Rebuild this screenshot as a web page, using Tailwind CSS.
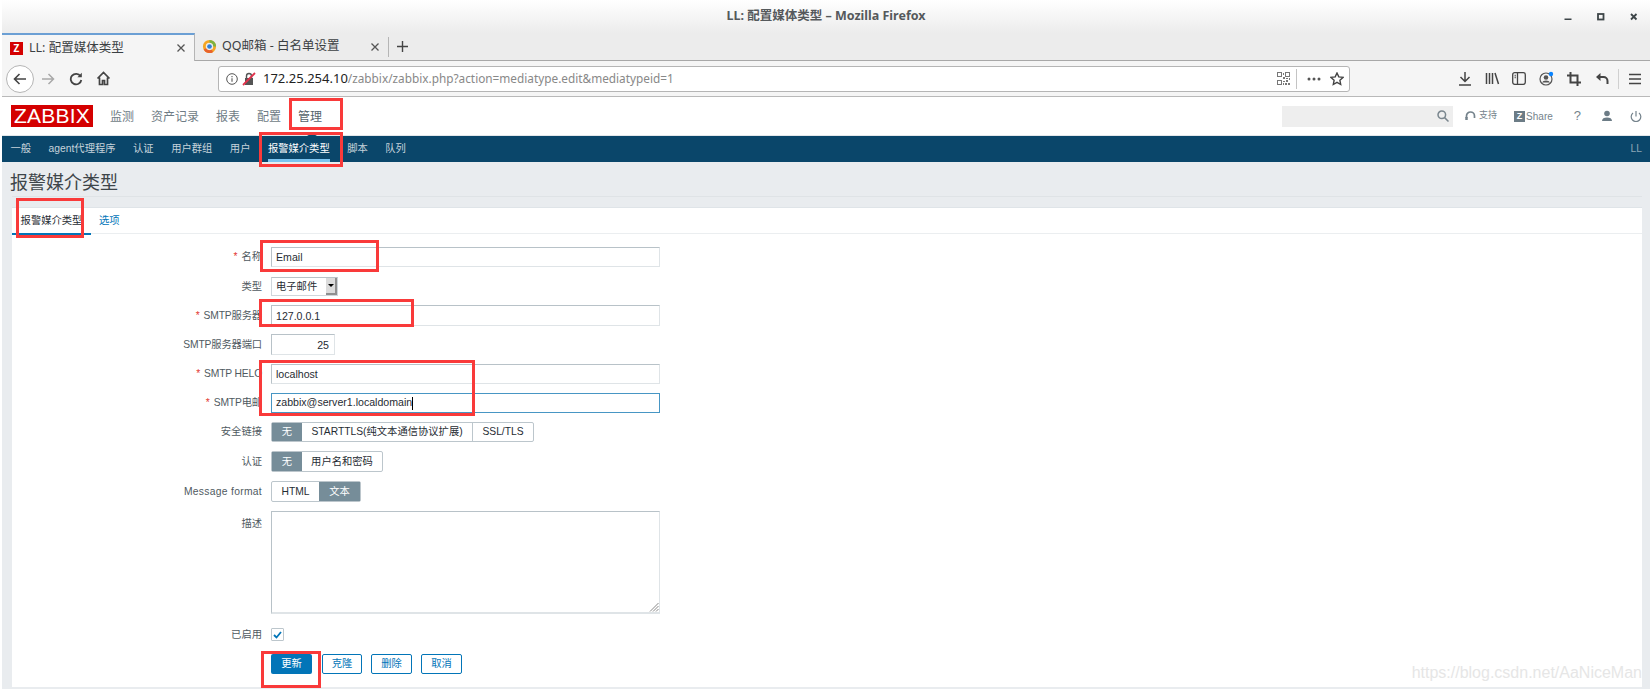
<!DOCTYPE html>
<html lang="zh-CN">
  <head>
    <meta charset="UTF-8" />
    <title>LL: 配置媒体类型</title>
    <script src="https://cdn.jsdelivr.net/npm/@tailwindcss/browser@4"></script>
  </head>
  <body class="bg-white">
    <div class="relative w-[1650px] h-[689px] overflow-hidden pl-[2px] bg-white flex flex-col font-['Liberation_Sans','Noto_Sans_CJK_SC',sans-serif] text-[10.3px] text-[#1f2c33]">

      <!-- window title -->
      <div class="h-[33px] shrink-0 grid grid-cols-[1fr_auto_1fr] items-center bg-gradient-to-b from-white to-[#ececec]">
        <div></div>
        <div class="text-[12.5px] font-bold text-[#55595c] font-['Noto_Sans','Noto_Sans_CJK_SC',sans-serif]">LL: 配置媒体类型 – Mozilla Firefox</div>
        <div class="flex justify-end items-center pr-[10px] gap-[21px]">
          <svg width="12" height="12" viewBox="0 0 12 12"><rect x="2.500" y="7.500" width="7" height="1.500" fill="#3d4548"/></svg>
          <svg width="12" height="12" viewBox="0 0 12 12"><rect x="3" y="3" width="5.500" height="5.500" fill="none" stroke="#3d4548" stroke-width="1.800"/></svg>
          <svg width="12" height="12" viewBox="0 0 12 12"><path d="M3 3l5.500 5.500M8.500 3L3 8.500" stroke="#3d4548" stroke-width="1.800"/></svg>
        </div>
      </div>

      <!-- tabs -->
      <div class="h-[28px] shrink-0 flex bg-[#ececec] border-b border-[#a8a8a8] text-[#3b4043] font-['Noto_Sans','Noto_Sans_CJK_SC',sans-serif] text-[12.5px]">
        <div class="w-[193px] h-[28px] flex items-center pl-[8px] bg-[#f5f5f5] border-t-2 border-t-[#6b9fd4] border-r border-r-[#b5b5b5]">
          <div class="w-[13px] h-[13px] bg-[#d40000] text-white text-[10px] font-bold flex items-center justify-center">Z</div>
          <span class="ml-[6px]">LL: 配置媒体类型</span>
          <svg class="ml-[52px]" width="10" height="10" viewBox="0 0 10 10"><path d="M1.500 1.500l7 7M8.500 1.500l-7 7" stroke="#555" stroke-width="1.300"/></svg>
        </div>
        <div class="w-[193px] flex items-center pl-[7px]">
          <svg width="15" height="15" viewBox="0 0 16 16" fill="none" stroke-width="3">
            <circle cx="8" cy="8" r="5.500" stroke="#f5a623"/>
            <path d="M8 2.500a5.500 5.500 0 0 1 5.500 5.500" stroke="#7cb342"/>
            <path d="M3 10.500a5.500 5.500 0 0 0 8 2" stroke="#e8622c"/>
            <circle cx="8" cy="8" r="2.500" fill="#2f80d8" stroke="none"/>
          </svg>
          <span class="ml-[5px]">QQ邮箱 - 白名单设置</span>
          <svg class="ml-[30px]" width="10" height="10" viewBox="0 0 10 10"><path d="M1.500 1.500l7 7M8.500 1.500l-7 7" stroke="#555" stroke-width="1.300"/></svg>
        </div>
        <div class="w-px h-[20px] mt-[4px] bg-[#b5b5b5]"></div>
        <svg class="ml-[7px] mt-[7px]" width="13" height="13" viewBox="0 0 13 13"><path d="M6.500 1v11M1 6.500h11" stroke="#444" stroke-width="1.400"/></svg>
      </div>

      <!-- toolbar -->
      <div class="h-[36px] shrink-0 flex items-center bg-[#f5f5f5] border-b border-[#b9b9b9] text-[#4a4f52]">
        <div class="ml-[4px] w-[28px] h-[28px] rounded-full border border-[#b5b5b5] bg-white flex items-center justify-center">
          <svg width="16" height="16" viewBox="0 0 16 16" fill="none" stroke="#444" stroke-width="1.600"><path d="M14 8H2.500M7.500 3l-5 5 5 5"/></svg>
        </div>
        <div class="w-[28px] flex justify-center">
          <svg width="16" height="16" viewBox="0 0 16 16" fill="none" stroke="#a9a9a9" stroke-width="1.500"><path d="M2 8h11.500M8.500 3l5 5-5 5"/></svg>
        </div>
        <div class="w-[27px] flex justify-center">
          <svg width="14" height="14" viewBox="0 0 14 14" fill="none" stroke="#444" stroke-width="1.800"><path d="M11.500 4.200A5.300 5.300 0 1 0 12.300 8"/><path d="M12.800 0.800v4.400H8.400" fill="#444" stroke="none"/></svg>
        </div>
        <div class="w-[28px] flex justify-center">
          <svg width="15" height="15" viewBox="0 0 15 15" fill="none" stroke="#444" stroke-width="1.700"><path d="M1.500 7.500L7.500 1.500l6 6M3.500 6.500v7h3v-4h2v4h3v-7"/></svg>
        </div>
        <div class="ml-[101px] w-[1132px] h-[26px] flex items-center bg-white border border-[#b5b5b5] rounded-[3px]">
          <svg class="ml-[7px]" width="12" height="12" viewBox="0 0 12 12" fill="none" stroke="#555"><circle cx="6" cy="6" r="5.300"/><path d="M6 5.200v3.600M6 3v1.200" stroke-width="1.100"/></svg>
          <svg class="ml-[4px]" width="14" height="14" viewBox="0 0 14 14"><path d="M3 6h8v7H3z" fill="#555"/><path d="M4.500 6V4a2.500 2.500 0 0 1 5 0v2" fill="none" stroke="#555" stroke-width="1.400"/><path d="M1 13L13 1" stroke="#e0334c" stroke-width="1.800"/></svg>
          <span class="ml-[7px] text-[11.800px] text-[#888] font-['Noto_Sans',sans-serif] whitespace-nowrap"><span class="text-[13px] text-[#222]">172.25.254.10</span>/zabbix/zabbix.php?action=mediatype.edit&amp;mediatypeid=1</span>
          <svg class="ml-auto" width="13" height="13" viewBox="0 0 13 13" fill="#777"><path d="M0 0h5v5H0zM1 1v3h3V1zM8 0h5v5H8zM9 1v3h3V1zM0 8h5v5H0zM1 9v3h3V9zM6 1h1v2H6zM6 5h2v2H6zM9 6h2v1H9zM12 6h1v2h-1zM6 9h2v1H6zM9 8h2v2H9zM6 11h1v2H6zM8 11h2v2H8zM11 11h2v2h-2z"/></svg>
          <div class="ml-[6px] w-px h-[20px] bg-[#c4c4c4]"></div>
          <svg class="ml-[10px]" width="14" height="4" viewBox="0 0 14 4" fill="#555"><circle cx="2" cy="2" r="1.500"/><circle cx="7" cy="2" r="1.500"/><circle cx="12" cy="2" r="1.500"/></svg>
          <svg class="ml-[9px] mr-[5px]" width="14" height="14" viewBox="0 0 14 14" fill="none" stroke="#444" stroke-width="1.400"><path d="M7 1l1.800 3.900 4.200.5-3.100 2.900.8 4.200L7 10.400l-3.700 2.100.8-4.200L1 5.400l4.200-.5z"/></svg>
        </div>
        <div class="ml-[101px] flex items-center">
          <div class="w-[27.400px] flex justify-center">
            <svg width="14" height="15" viewBox="0 0 14 15" fill="none" stroke="#444" stroke-width="1.500"><path d="M7 1v9M2.500 6L7 10.500 11.500 6M1 14h12"/></svg>
          </div>
          <div class="w-[27.400px] flex justify-center">
            <svg width="15" height="13" viewBox="0 0 15 13" fill="none" stroke="#444" stroke-width="1.500"><path d="M1.500 1v11M4.500 1v11M7.500 1v11M10 1l3.500 11"/></svg>
          </div>
          <div class="w-[27.400px] flex justify-center">
            <svg width="14" height="13" viewBox="0 0 14 13" fill="none" stroke="#444" stroke-width="1.300"><rect x="0.700" y="0.700" width="12.600" height="11.600" rx="2"/><path d="M5.500 1v11"/><path d="M2.500 3.500h1.500M2.500 5.500h1.500" stroke="#777"/></svg>
          </div>
          <div class="w-[27.400px] flex justify-center">
            <svg width="15" height="15" viewBox="0 0 15 15" fill="none"><circle cx="7" cy="8" r="6" stroke="#555" stroke-width="1.200"/><circle cx="7" cy="6.500" r="2.300" fill="#555"/><path d="M3 11.500a4.200 3 0 0 1 8 0" fill="#555"/><circle cx="12" cy="3" r="2.200" fill="#0a84ff"/></svg>
          </div>
          <div class="w-[27.400px] flex justify-center">
            <svg width="14" height="14" viewBox="0 0 14 14" fill="none" stroke="#444" stroke-width="2"><path d="M3.500 0v10.500H14M0 3.500h10.500V14"/></svg>
          </div>
          <div class="w-[27.400px] flex justify-center">
            <svg width="14" height="13" viewBox="0 0 14 13" fill="none"><path d="M5.500 1L1 5l4.500 4z" fill="#444"/><path d="M4 5h4.500a4 4 0 0 1 4 4v3" stroke="#444" stroke-width="2"/></svg>
          </div>
          <div class="ml-[3px] w-px h-[20px] bg-[#d0d0d0]"></div>
          <svg class="ml-[10px]" width="12" height="12" viewBox="0 0 12 12"><path d="M0 1.500h12M0 6h12M0 10.500h12" stroke="#444" stroke-width="1.500"/></svg>
        </div>
      </div>

      <!-- zabbix header -->
      <div class="h-[39px] shrink-0 flex items-center bg-white border-b border-[#e3e7ea]">
        <div class="ml-[9px] w-[82px] h-[22px] bg-[#d40000] text-white text-[21px] leading-[22px] text-center tracking-[0.2px]">ZABBIX</div>
        <nav class="ml-[17px] pt-[2px] flex gap-[17px] text-[12px] text-[#6f7c85]">
          <span>监测</span>
          <span>资产记录</span>
          <span>报表</span>
          <span>配置</span>
          <span class="text-[#55636c]">管理</span>
        </nav>
        <div class="ml-[960px] w-[171px] h-[21px] flex items-center justify-end pr-[4px] bg-[#eeeeee]">
          <svg width="12" height="12" viewBox="0 0 12 12" fill="none" stroke="#7a868e" stroke-width="1.500"><circle cx="4.800" cy="4.800" r="3.800"/><path d="M7.600 7.600L11.500 11.500"/></svg>
        </div>
        <svg class="ml-[12px]" width="11" height="11" viewBox="0 0 11 11" fill="none" stroke="#75838c" stroke-width="1.700"><path d="M1.500 7V5a4 4 0 0 1 8 0v2"/><path d="M1.500 6v3" stroke-width="2.500"/></svg>
        <span class="ml-[3px] text-[9px] text-[#75838c]">支持</span>
        <div class="ml-[17px] w-[11px] h-[11px] bg-[#6c7c86] text-white text-[9px] font-bold leading-[11px] text-center">Z</div>
        <span class="ml-[1px] text-[10px] text-[#75838c]">Share</span>
        <span class="ml-[21px] text-[13px] text-[#75838c]">?</span>
        <svg class="ml-[20px]" width="12" height="12" viewBox="0 0 12 12" fill="#6c7c86"><circle cx="6" cy="3.500" r="2.800"/><path d="M1 11c0-2.500 2-3.500 5-3.500s5 1 5 3.500z"/></svg>
        <svg class="ml-[17px]" width="12" height="12" viewBox="0 0 12 12" fill="none" stroke="#75838c" stroke-width="1.200"><path d="M6 1v5.500"/><path d="M3 3a4.800 4.800 0 1 0 6 0"/></svg>
      </div>

      <!-- sub navigation -->
      <div class="relative h-[26px] shrink-0 flex items-stretch pl-[8.500px] gap-[17.500px] bg-[#0a466a] text-[#c6d3db]">
        <span class="flex items-center pt-[2px] border-b-[3px] border-transparent">一般</span>
        <span class="flex items-center pt-[2px] border-b-[3px] border-transparent">agent代理程序</span>
        <span class="flex items-center pt-[2px] border-b-[3px] border-transparent">认证</span>
        <span class="flex items-center pt-[2px] border-b-[3px] border-transparent">用户群组</span>
        <span class="flex items-center pt-[2px] border-b-[3px] border-transparent">用户</span>
        <span class="flex items-center pt-[2px] border-b-[3px] border-[#7cc4f0] text-white">报警媒介类型</span>
        <span class="flex items-center pt-[2px] border-b-[3px] border-transparent">脚本</span>
        <span class="flex items-center pt-[2px] border-b-[3px] border-transparent">队列</span>
        <span class="ml-auto mr-[8px] flex items-center pt-[2px] border-b-[3px] border-transparent text-[#8ba5b5]">LL</span>
        <div class="absolute left-[305px] top-[-3px] w-0 h-0 border-x-[5px] border-x-transparent border-b-[3px] border-b-[#0a466a]"></div>
      </div>

      <!-- page -->
      <div class="flex-1 bg-[#e9ecef] pl-[10px] pr-[8px]">
        <div class="h-[35px] flex items-center border-b border-[#dfe3e6]">
          <h1 class="-ml-[2px] pt-[8px] text-[18px] text-[#3e4549]">报警媒介类型</h1>
        </div>
        <div class="mt-[10px] h-[480px] bg-white border-t border-[#dfe4e8]">
          <div class="h-[26px] flex border-b border-[#ebeef0]">
            <span class="w-[79px] flex items-center justify-center border-b-2 border-[#0275b8] text-[#1f2c33] h-[27px]">报警媒介类型</span>
            <span class="ml-[8px] flex items-center text-[#0275b8]">选项</span>
          </div>

          <form class="pt-[13px] flex flex-col text-[#4f5a61]">
            <div class="h-[20px] flex items-center">
              <label class="w-[259px] pr-[9px] text-right"><span class="text-[#e33734] mr-[4px]">*</span>名称</label>
              <input class="w-[389px] h-[20px] px-[4px] border border-[#dfe4e7] border-t-[#b8c2c8] border-l-[#b8c2c8] text-[10.600px] text-[#1f2c33]" value="Email" />
            </div>
            <div class="mt-[10px] h-[19px] flex items-center">
              <label class="w-[259px] pr-[9px] text-right">类型</label>
              <div class="w-[67px] h-[19px] flex items-center justify-between pl-[4px] border border-[#cfd6db] border-t-[#b8c2c8] text-[#1f2c33]">
                电子邮件
                <div class="w-[11px] h-[17px] flex items-center justify-center bg-[#dcdcdc] border-r-2 border-b-2 border-[#8f8f8f]">
                  <div class="w-0 h-0 border-x-[3px] border-x-transparent border-t-[3px] border-t-black"></div>
                </div>
              </div>
            </div>
            <div class="mt-[9px] h-[21px] flex items-center">
              <label class="w-[259px] pr-[9px] text-right tracking-[-0.15px]"><span class="text-[#e33734] mr-[4px]">*</span>SMTP服务器</label>
              <input class="w-[389px] h-[21px] px-[4px] border border-[#dfe4e7] border-t-[#b8c2c8] border-l-[#b8c2c8] text-[10.600px] text-[#1f2c33]" value="127.0.0.1" />
            </div>
            <div class="mt-[8px] h-[21px] flex items-center">
              <label class="w-[259px] pr-[9px] text-right tracking-[-0.15px]">SMTP服务器端口</label>
              <input class="w-[64px] h-[21px] px-[5px] text-right border border-[#dfe4e7] border-t-[#b8c2c8] border-l-[#b8c2c8] text-[10.600px] text-[#1f2c33]" value="25" />
            </div>
            <div class="mt-[9px] h-[20px] flex items-center">
              <label class="w-[259px] pr-[9px] text-right tracking-[-0.15px]"><span class="text-[#e33734] mr-[4px]">*</span>SMTP HELO</label>
              <input class="w-[389px] h-[20px] px-[4px] border border-[#dfe4e7] border-t-[#b8c2c8] border-l-[#b8c2c8] text-[10.600px] text-[#1f2c33]" value="localhost" />
            </div>
            <div class="mt-[9px] h-[20px] flex items-center">
              <label class="w-[259px] pr-[9px] text-right tracking-[-0.15px]"><span class="text-[#e33734] mr-[4px]">*</span>SMTP电邮</label>
              <div class="w-[389px] h-[20px] flex items-center pl-[4px] border border-[#4796c4] text-[10.600px] text-[#1f2c33]">zabbix@server1.localdomain<span class="w-px h-[13px] bg-black"></span></div>
            </div>
            <div class="mt-[9px] h-[20px] flex items-center">
              <label class="w-[259px] pr-[9px] text-right">安全链接</label>
              <div class="flex h-[20px] border border-[#bcc6cc] rounded-[2px] text-[#1f2c33]">
                <span class="w-[30px] flex items-center justify-center bg-[#768d99] text-white">无</span>
                <span class="w-[171px] flex items-center justify-center border-r border-[#bcc6cc]">STARTTLS(纯文本通信协议扩展)</span>
                <span class="w-[60px] flex items-center justify-center">SSL/TLS</span>
              </div>
            </div>
            <div class="mt-[9px] h-[21px] flex items-center">
              <label class="w-[259px] pr-[9px] text-right">认证</label>
              <div class="flex h-[21px] border border-[#bcc6cc] rounded-[2px] text-[#1f2c33]">
                <span class="w-[30px] flex items-center justify-center bg-[#768d99] text-white">无</span>
                <span class="w-[80px] flex items-center justify-center">用户名和密码</span>
              </div>
            </div>
            <div class="mt-[9px] h-[21px] flex items-center">
              <label class="w-[259px] pr-[9px] text-right tracking-[0.3px]">Message format</label>
              <div class="flex h-[21px] border border-[#bcc6cc] rounded-[2px] text-[#1f2c33]">
                <span class="w-[47px] flex items-center justify-center">HTML</span>
                <span class="w-[41px] flex items-center justify-center bg-[#768d99] text-white">文本</span>
              </div>
            </div>
            <div class="mt-[9px] h-[103px] flex">
              <label class="w-[259px] pr-[9px] pt-[5px] text-right">描述</label>
              <div class="relative w-[389px] h-[103px] border border-[#dfe4e7] border-t-[#b8c2c8] border-l-[#b8c2c8] border-b-2">
                <svg class="absolute right-0 bottom-0" width="10" height="10" viewBox="0 0 10 10" stroke="#888"><path d="M9.500 1L1 9.500M9.500 4L4 9.500M9.500 7L7 9.500"/></svg>
              </div>
            </div>
            <div class="mt-[14px] h-[13px] flex items-center">
              <label class="w-[259px] pr-[9px] text-right">已启用</label>
              <div class="w-[13px] h-[13px] flex items-center justify-center border border-[#bcc6cc] rounded-[1px]">
                <svg width="9" height="8" viewBox="0 0 9 8" fill="none" stroke="#0275b8" stroke-width="1.800"><path d="M1 4l2.500 2.500L8 1"/></svg>
              </div>
            </div>
            <div class="mt-[13px] h-[20px] flex pl-[259px] gap-[10px]">
              <button type="button" class="w-[41px] rounded-[2px] bg-[#0275b8] text-white">更新</button>
              <button type="button" class="w-[40px] rounded-[2px] border border-[#0275b8] text-[#0275b8]">克隆</button>
              <button type="button" class="w-[41px] -ml-px rounded-[2px] border border-[#0275b8] text-[#0275b8]">删除</button>
              <button type="button" class="w-[41px] -ml-px rounded-[2px] border border-[#0275b8] text-[#0275b8]">取消</button>
            </div>
          </form>
        </div>
      </div>

      <!-- screenshot annotations -->
      <div class="absolute left-[289px] top-[98px] w-[54px] h-[32px] border-[3px] border-[#f93a3a]"></div>
      <div class="absolute left-[259px] top-[132px] w-[84px] h-[35px] border-[3px] border-[#f93a3a]"></div>
      <div class="absolute left-[16px] top-[198px] w-[68px] h-[40px] border-[3px] border-[#f93a3a]"></div>
      <div class="absolute left-[260px] top-[240px] w-[119px] h-[32px] border-[3px] border-[#f93a3a]"></div>
      <div class="absolute left-[259px] top-[299px] w-[155px] h-[28px] border-[3px] border-[#f93a3a]"></div>
      <div class="absolute left-[259px] top-[360px] w-[216px] h-[56px] border-[3px] border-[#f93a3a]"></div>
      <div class="absolute left-[261px] top-[651px] w-[60px] h-[37px] border-[3px] border-[#f93a3a]"></div>
      <div class="absolute right-[8px] top-[661px] text-[16px] text-[#e6e6e6]">https://blog.csdn.net/AaNiceMan</div>
    </div>
  </body>
</html>
